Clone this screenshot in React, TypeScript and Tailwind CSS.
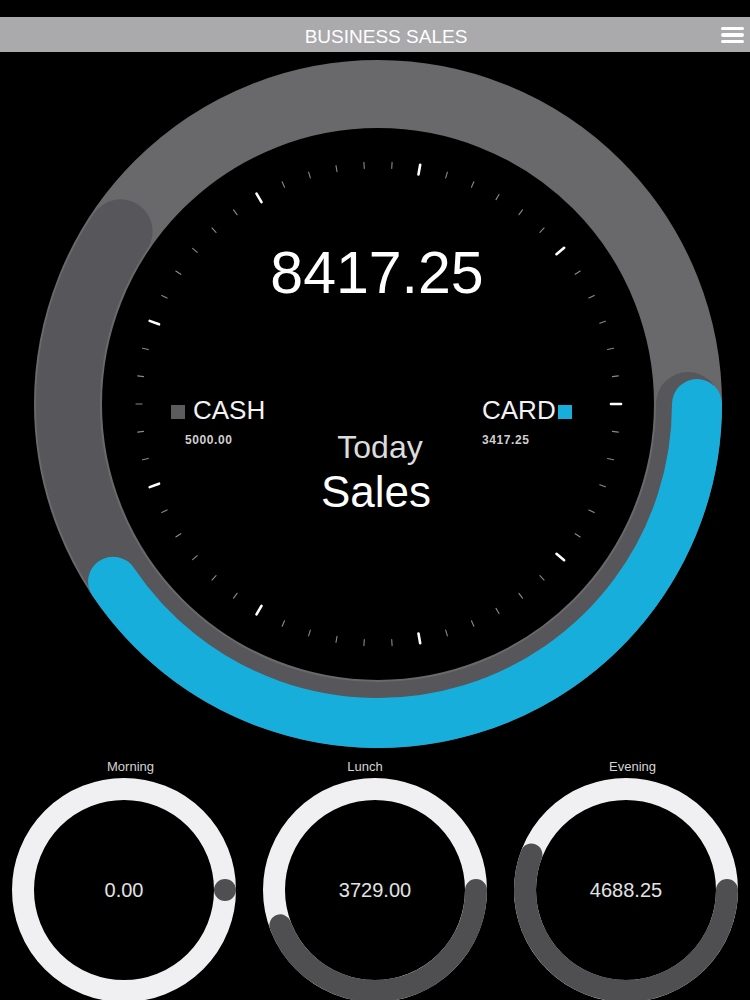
import React from "react";

const rad = (d: number) => (d * Math.PI) / 180;

function arcPath(cx: number, cy: number, r: number, a0: number, a1: number) {
  const x0 = cx + r * Math.cos(rad(a0));
  const y0 = cy + r * Math.sin(rad(a0));
  const x1 = cx + r * Math.cos(rad(a1));
  const y1 = cy + r * Math.sin(rad(a1));
  const large = a1 - a0 > 180 ? 1 : 0;
  return `M ${x0} ${y0} A ${r} ${r} 0 ${large} 1 ${x1} ${y1}`;
}

const TOTAL = 8417.25;
const CASH = 5000.0;
const CARD = 3417.25;

function MainDial() {
  const cx = 378;
  const cy = 352;
  const ticks = Array.from({ length: 54 }, (_, i) => {
    const a = (i * 360) / 54;
    const major = i % 6 === 0;
    const r0 = major ? 233 : 236;
    const r1 = major ? 243 : 242;
    return (
      <line
        key={i}
        x1={cx + r0 * Math.cos(rad(a))}
        y1={cy + r0 * Math.sin(rad(a))}
        x2={cx + r1 * Math.cos(rad(a))}
        y2={cy + r1 * Math.sin(rad(a))}
        stroke={major ? "#ffffff" : "#8a8a8a"}
        strokeWidth={major ? 2.6 : 1.1}
        strokeLinecap="round"
      />
    );
  });
  const cashDeg = (CASH / TOTAL) * 360;
  const cardDeg = (CARD / TOTAL) * 360;
  return (
    <svg className="absolute left-0 top-0" width="750" height="708" viewBox="0 0 750 708">
      <circle cx={cx} cy={cy} r={310} fill="none" stroke="#69686a" strokeWidth={68} />
      <path d={arcPath(cx, cy, 310, 0, cashDeg)} fill="none" stroke="#57565a" strokeWidth={64} strokeLinecap="round" />
      <path d={arcPath(cx, cy, 319, 0, cardDeg)} fill="none" stroke="#18aedb" strokeWidth={50} strokeLinecap="round" />
      {ticks}
    </svg>
  );
}

function SmallRing({ value }: { value: number }) {
  const c = 112;
  const r = 101;
  const deg = (value / TOTAL) * 360;
  return (
    <svg className="absolute inset-0" width="224" height="224" viewBox="0 0 224 224">
      <circle cx={c} cy={c} r={r} fill="none" stroke="#f0eff1" strokeWidth={22} />
      {deg < 0.5 ? (
        <circle cx={c + r} cy={c} r={11} fill="#4f4e50" />
      ) : (
        <path d={arcPath(c, c, r, 0, deg)} fill="none" stroke="#4f4e50" strokeWidth={22} strokeLinecap="round" />
      )}
    </svg>
  );
}

function Tile({ label, value, text, labelPad }: { label: string; value: number; text: string; labelPad: string }) {
  return (
    <div className="flex w-[224px] flex-col">
      <div className={`text-center text-[13px] leading-none text-[#d4d4d4] ${labelPad}`}>{label}</div>
      <div className="relative mt-[5px] flex h-[224px] w-[224px] items-center justify-center">
        <SmallRing value={value} />
        <span className="relative text-[20px] leading-none text-[#e2e2e2]">{text}</span>
      </div>
    </div>
  );
}

export default function App() {
  return (
    <div className="h-[1000px] w-[750px] overflow-hidden bg-black font-['Liberation_Sans',Arial,sans-serif] text-white">
      <div className="h-[17px] bg-black" />
      <div className="grid h-[35px] grid-cols-[1fr_auto_1fr] items-center bg-[#aaa9ac]">
        <div />
        <div className="pl-[22px] pt-[3px] text-[19px] leading-none text-white">BUSINESS SALES</div>
        <div className="flex justify-end pr-[6px]">
          <div className="flex w-[23px] flex-col gap-[3px] pt-[1px]">
            <div className="h-[3.5px] rounded-full bg-white" />
            <div className="h-[3.5px] rounded-full bg-white" />
            <div className="h-[3.5px] rounded-full bg-white" />
          </div>
        </div>
      </div>

      <div className="relative h-[708px]">
        <MainDial />
        <div className="relative flex flex-col pt-[192px]">
          <div className="pl-[4px] text-center text-[59px] leading-none text-white">8417.25</div>
          <div className="mt-[94px] flex items-start pl-[171px]">
            <div className="flex w-[130px] flex-col">
              <div className="flex items-baseline">
                <div className="mr-[8px] h-[14px] w-[14px] bg-[#5c5b5d]" />
                <span className="text-[26px] leading-none text-[#f2f2f2]">CASH</span>
              </div>
              <div className="mt-[11px] pl-[14px] text-[12px] font-semibold leading-none tracking-[0.6px] text-[#cfcfcf]">
                5000.00
              </div>
            </div>
            <div className="mt-[34px] flex w-[150px] flex-col items-center">
              <div className="pl-[8px] text-[32px] leading-none text-[#dcdcdc]">Today</div>
              <div className="mt-[7px] text-[44px] leading-none text-white">Sales</div>
            </div>
            <div className="flex flex-col pl-[31px]">
              <div className="flex items-baseline">
                <span className="text-[26px] leading-none text-[#f2f2f2]">CARD</span>
                <div className="ml-[2px] h-[14px] w-[14px] bg-[#18aedb]" />
              </div>
              <div className="mt-[11px] text-[12px] font-semibold leading-none tracking-[0.6px] text-[#cfcfcf]">
                3417.25
              </div>
            </div>
          </div>
        </div>
      </div>

      <div className="flex justify-between px-[12px]">
        <Tile label="Morning" value={0} text="0.00" labelPad="pl-[13px]" />
        <Tile label="Lunch" value={3729} text="3729.00" labelPad="pr-[20px]" />
        <Tile label="Evening" value={4688.25} text="4688.25" labelPad="pl-[13px]" />
      </div>
    </div>
  );
}
